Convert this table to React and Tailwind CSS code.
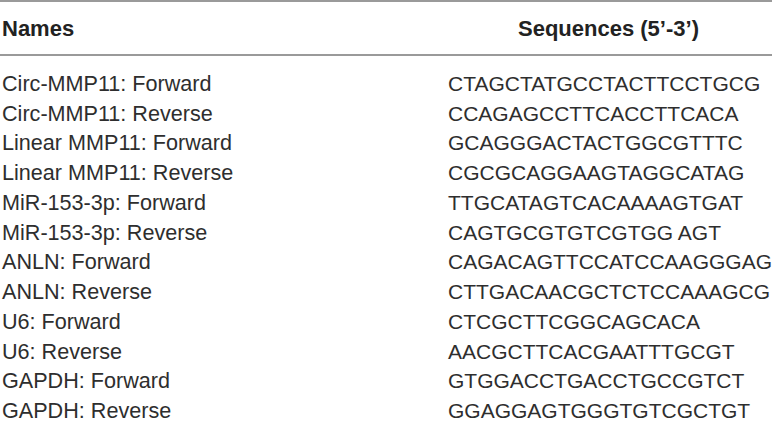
import React from "react";

const rows = [
  ["Circ-MMP11: Forward", "CTAGCTATGCCTACTTCCTGCG"],
  ["Circ-MMP11: Reverse", "CCAGAGCCTTCACCTTCACA"],
  ["Linear MMP11: Forward", "GCAGGGACTACTGGCGTTTC"],
  ["Linear MMP11: Reverse", "CGCGCAGGAAGTAGGCATAG"],
  ["MiR-153-3p: Forward", "TTGCATAGTCACAAAAGTGAT"],
  ["MiR-153-3p: Reverse", "CAGTGCGTGTCGTGG AGT"],
  ["ANLN: Forward", "CAGACAGTTCCATCCAAGGGAG"],
  ["ANLN: Reverse", "CTTGACAACGCTCTCCAAAGCG"],
  ["U6: Forward", "CTCGCTTCGGCAGCACA"],
  ["U6: Reverse", "AACGCTTCACGAATTTGCGT"],
  ["GAPDH: Forward", "GTGGACCTGACCTGCCGTCT"],
  ["GAPDH: Reverse", "GGAGGAGTGGGTGTCGCTGT"],
];

export default function App() {
  return (
    <div
      className="w-[772px] h-[422px] bg-white overflow-hidden text-[#222]"
      style={{ fontFamily: '"Liberation Sans", Arial, sans-serif' }}
    >
      <div className="border-t-2 border-b-2 border-[#9a9a9a] grid grid-cols-[445px_1fr] pt-[12px] pb-[10px] font-bold text-[22px] leading-[29.75px]">
        <div className="pl-[2px]">Names</div>
        <div className="text-center">Sequences (5’-3’)</div>
      </div>
      <div className="pt-[13px] leading-[29.75px] text-[#2e2e2e]">
        {rows.map(([n, s]) => (
          <div key={n} className="grid grid-cols-[445px_1fr]">
            <div className="pl-[2px] whitespace-nowrap text-[21.6px]">{n}</div>
            <div className="pl-[3px] whitespace-nowrap text-[21px]">{s}</div>
          </div>
        ))}
      </div>
    </div>
  );
}
